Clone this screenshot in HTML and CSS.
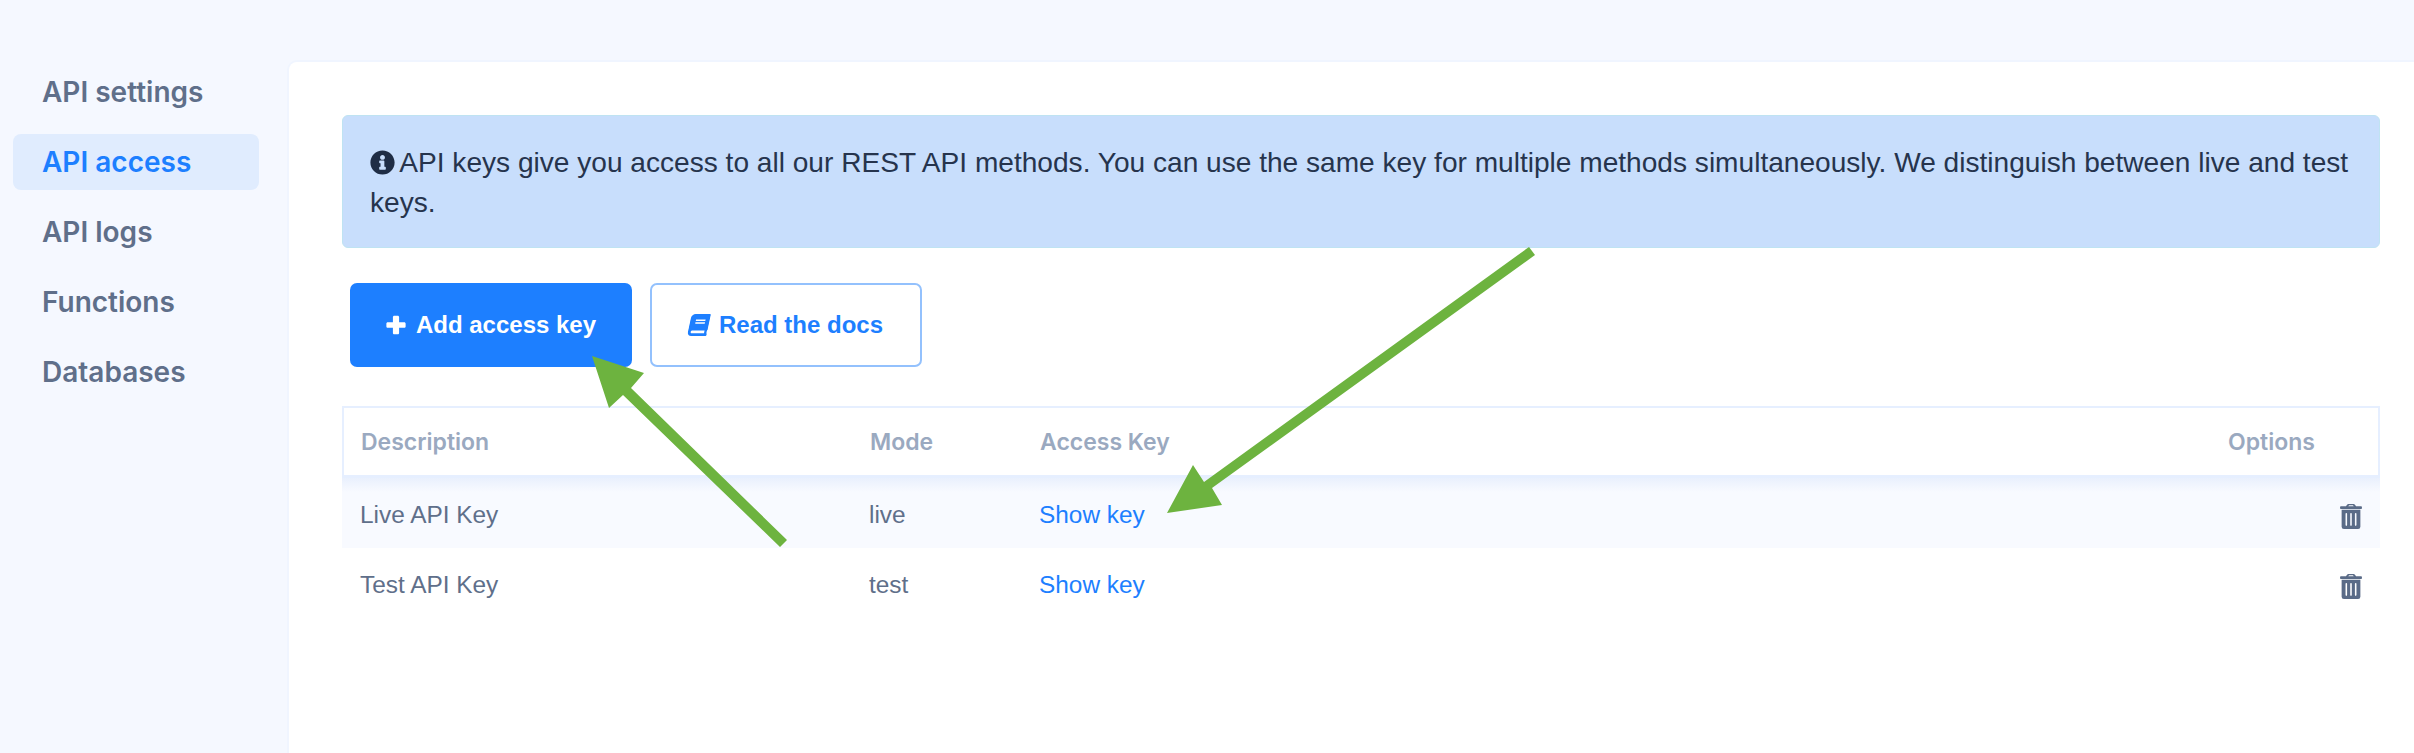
FILE: index.html
```html
<!DOCTYPE html>
<html lang="en">
<head>
<meta charset="utf-8">
<title>API access</title>
<link rel="stylesheet" href="styles.css">
</head>
<body>
<div class="page">
  <nav class="sidebar">
    <a class="nav-item">API settings</a>
    <a class="nav-item active">API access</a>
    <a class="nav-item">API logs</a>
    <a class="nav-item">Functions</a>
    <a class="nav-item">Databases</a>
  </nav>
  <main class="card">
    <div class="alert">
      <svg class="icon-info" viewBox="0 0 512 512"><path fill="#1f2d45" fill-rule="evenodd" d="M256 8C119 8 8 119 8 256s111 248 248 248 248-111 248-248S393 8 256 8zm0 94c28 0 50 22 50 50s-22 50-50 50-50-22-50-50 22-50 50-50zm68 286c0 8-6 14-14 14H202c-8 0-14-6-14-14v-30c0-8 6-14 14-14h14v-72h-14c-8 0-14-6-14-14v-30c0-8 6-14 14-14h78c8 0 14 6 14 14v116h16c8 0 14 6 14 14v30z"/></svg>
      API keys give you access to all our REST API methods. You can use the same key for multiple methods simultaneously. We distinguish between live and test keys.
    </div>
    <div class="actions">
      <button class="btn primary">
        <svg class="icon-btn" viewBox="0 0 448 512"><path fill="#fff" d="M416 192H296V72c0-18-14-32-32-32h-80c-18 0-32 14-32 32v120H32c-18 0-32 14-32 32v64c0 18 14 32 32 32h120v120c0 18 14 32 32 32h80c18 0 32-14 32-32V320h120c18 0 32-14 32-32v-64c0-18-14-32-32-32z"/></svg>
        Add access key
      </button>
      <button class="btn outline">
        <svg class="icon-btn book" viewBox="0 0 448 512"><path fill="#1d7fff" d="M448 360V24c0-13-11-24-24-24H96C43 0 0 43 0 96v320c0 53 43 96 96 96h328c13 0 24-11 24-24v-16c0-8-3-14-9-19-4-15-4-59 0-73 6-5 9-12 9-20zM128 134c0-3 3-6 6-6h212c3 0 6 3 6 6v20c0 3-3 6-6 6H134c-3 0-6-3-6-6v-20zm0 64c0-3 3-6 6-6h212c3 0 6 3 6 6v20c0 3-3 6-6 6H134c-3 0-6-3-6-6v-20zm253 250H96c-18 0-32-14-32-32s14-32 32-32h285c-2 17-2 47 0 64z"/></svg>
        Read the docs
      </button>
    </div>
    <div class="table">
      <div class="row head">
        <span class="c-desc">Description</span><span class="c-mode">Mode</span><span class="c-key">Access Key</span><span class="c-opt">Options</span>
      </div>
      <div class="row body shaded">
        <span class="c-desc">Live API Key</span><span class="c-mode">live</span><a class="c-key link">Show key</a>
        <span class="c-opt"><svg class="trash" viewBox="0 0 448 512"><path fill="#5a6b87" fill-rule="evenodd" d="M32 464a48 48 0 0 0 48 48h288a48 48 0 0 0 48-48V120H32zm272-264a16 16 0 0 1 32 0v232a16 16 0 0 1-32 0zm-96 0a16 16 0 0 1 32 0v232a16 16 0 0 1-32 0zm-96 0a16 16 0 0 1 32 0v232a16 16 0 0 1-32 0zM16 48h104l24-34a32 32 0 0 1 26-14h108a32 32 0 0 1 26 14l24 34h104a16 16 0 0 1 16 16v24a16 16 0 0 1-16 16H16A16 16 0 0 1 0 88V64a16 16 0 0 1 16-16zm152 0h112l-12-16a8 8 0 0 0-6-4h-76a8 8 0 0 0-6 4z"/></svg></span>
      </div>
      <div class="row body">
        <span class="c-desc">Test API Key</span><span class="c-mode">test</span><a class="c-key link">Show key</a>
        <span class="c-opt"><svg class="trash" viewBox="0 0 448 512"><path fill="#5a6b87" fill-rule="evenodd" d="M32 464a48 48 0 0 0 48 48h288a48 48 0 0 0 48-48V120H32zm272-264a16 16 0 0 1 32 0v232a16 16 0 0 1-32 0zm-96 0a16 16 0 0 1 32 0v232a16 16 0 0 1-32 0zm-96 0a16 16 0 0 1 32 0v232a16 16 0 0 1-32 0zM16 48h104l24-34a32 32 0 0 1 26-14h108a32 32 0 0 1 26 14l24 34h104a16 16 0 0 1 16 16v24a16 16 0 0 1-16 16H16A16 16 0 0 1 0 88V64a16 16 0 0 1 16-16zm152 0h112l-12-16a8 8 0 0 0-6-4h-76a8 8 0 0 0-6 4z"/></svg></span>
      </div>
    </div>
  </main>
</div>
<svg class="annotations" viewBox="0 0 2414 753">
  <polygon fill="#6db33f" points="592,356 644,373 631,388 787,540 780,547 623,395 609,408"/>
  <polygon fill="#6db33f" points="1167,513 1193,465 1204,482 1529,247 1535,255 1212,488 1222,505"/>
</svg>
</body>
</html>
```
FILE: styles.css
```css
* { box-sizing: border-box; }
html, body { margin: 0; height: 100%; }
body { background: #f5f8ff; overflow: hidden; position: relative; }
.page { display: flex; height: 753px; padding: 62px 0 0 13px; }
.sidebar { width: 276px; flex: none; display: flex; flex-direction: column; gap: 14px; margin-top: 2px; font-family: Inter, sans-serif; font-weight: 600; font-size: 28px; color: #5f6f8a; }
.nav-item { display: flex; align-items: center; width: 246px; height: 56px; padding-left: 29px; border-radius: 8px; }
.nav-item.active { background: #e0ecfe; color: #1d7fff; }
.card { flex: 1; min-width: 0; background: #fff; border-radius: 8px 0 0 0; box-shadow: 0 0 0 2px #f0f5ff; padding: 53px 34px 0 53px; }
.alert { height: 133px; background: #c8defc; border: 1px solid #bfe3f2; border-radius: 6px; padding: 27px 26px 0 27px; font-family: "Liberation Sans", Arial, sans-serif; font-size: 28.1px; line-height: 40px; color: #26344d; }
.icon-info { width: 25px; height: 25px; vertical-align: -3px; margin-right: -2px; }
.actions { display: flex; gap: 18px; margin: 35px 0 0 8px; }
.btn { display: flex; align-items: center; justify-content: center; gap: 10px; height: 84px; border-radius: 7px; font-family: "Liberation Sans", Arial, sans-serif; font-weight: 700; font-size: 24px; }
.primary { width: 282px; background: #1d7fff; border: 0; color: #fff; }
.outline { width: 272px; background: #fff; border: 2px solid #93c1fd; color: #1d7fff; }
.icon-btn { width: 20px; height: 22px; }
.book { transform: skewX(-12deg); }
.table { margin-top: 39px; }
.row { display: grid; grid-template-columns: 509px 170px 1fr 150px; align-items: center; padding: 0 0 0 18px; }
.row span, .row a { display: block; }
.head { height: 72px; border: 2px solid #e6efff; border-bottom-width: 3px; font-family: Inter, sans-serif; font-weight: 600; font-size: 23px; color: #9aa9c0; padding-left: 17px; }
.body { height: 70px; padding-top: 3px; font-family: "Liberation Sans", Arial, sans-serif; font-size: 24.4px; color: #5f6f8a; }
.shaded { background: linear-gradient(#e9f0fd, #f8faff 14px); }
.link { color: #1d7fff; }
.body .c-opt { text-align: right; padding-right: 18px; }
.trash { width: 22px; height: 25px; display: inline-block; vertical-align: middle; }
.annotations { position: absolute; left: 0; top: 0; width: 2414px; height: 753px; pointer-events: none; }
```
